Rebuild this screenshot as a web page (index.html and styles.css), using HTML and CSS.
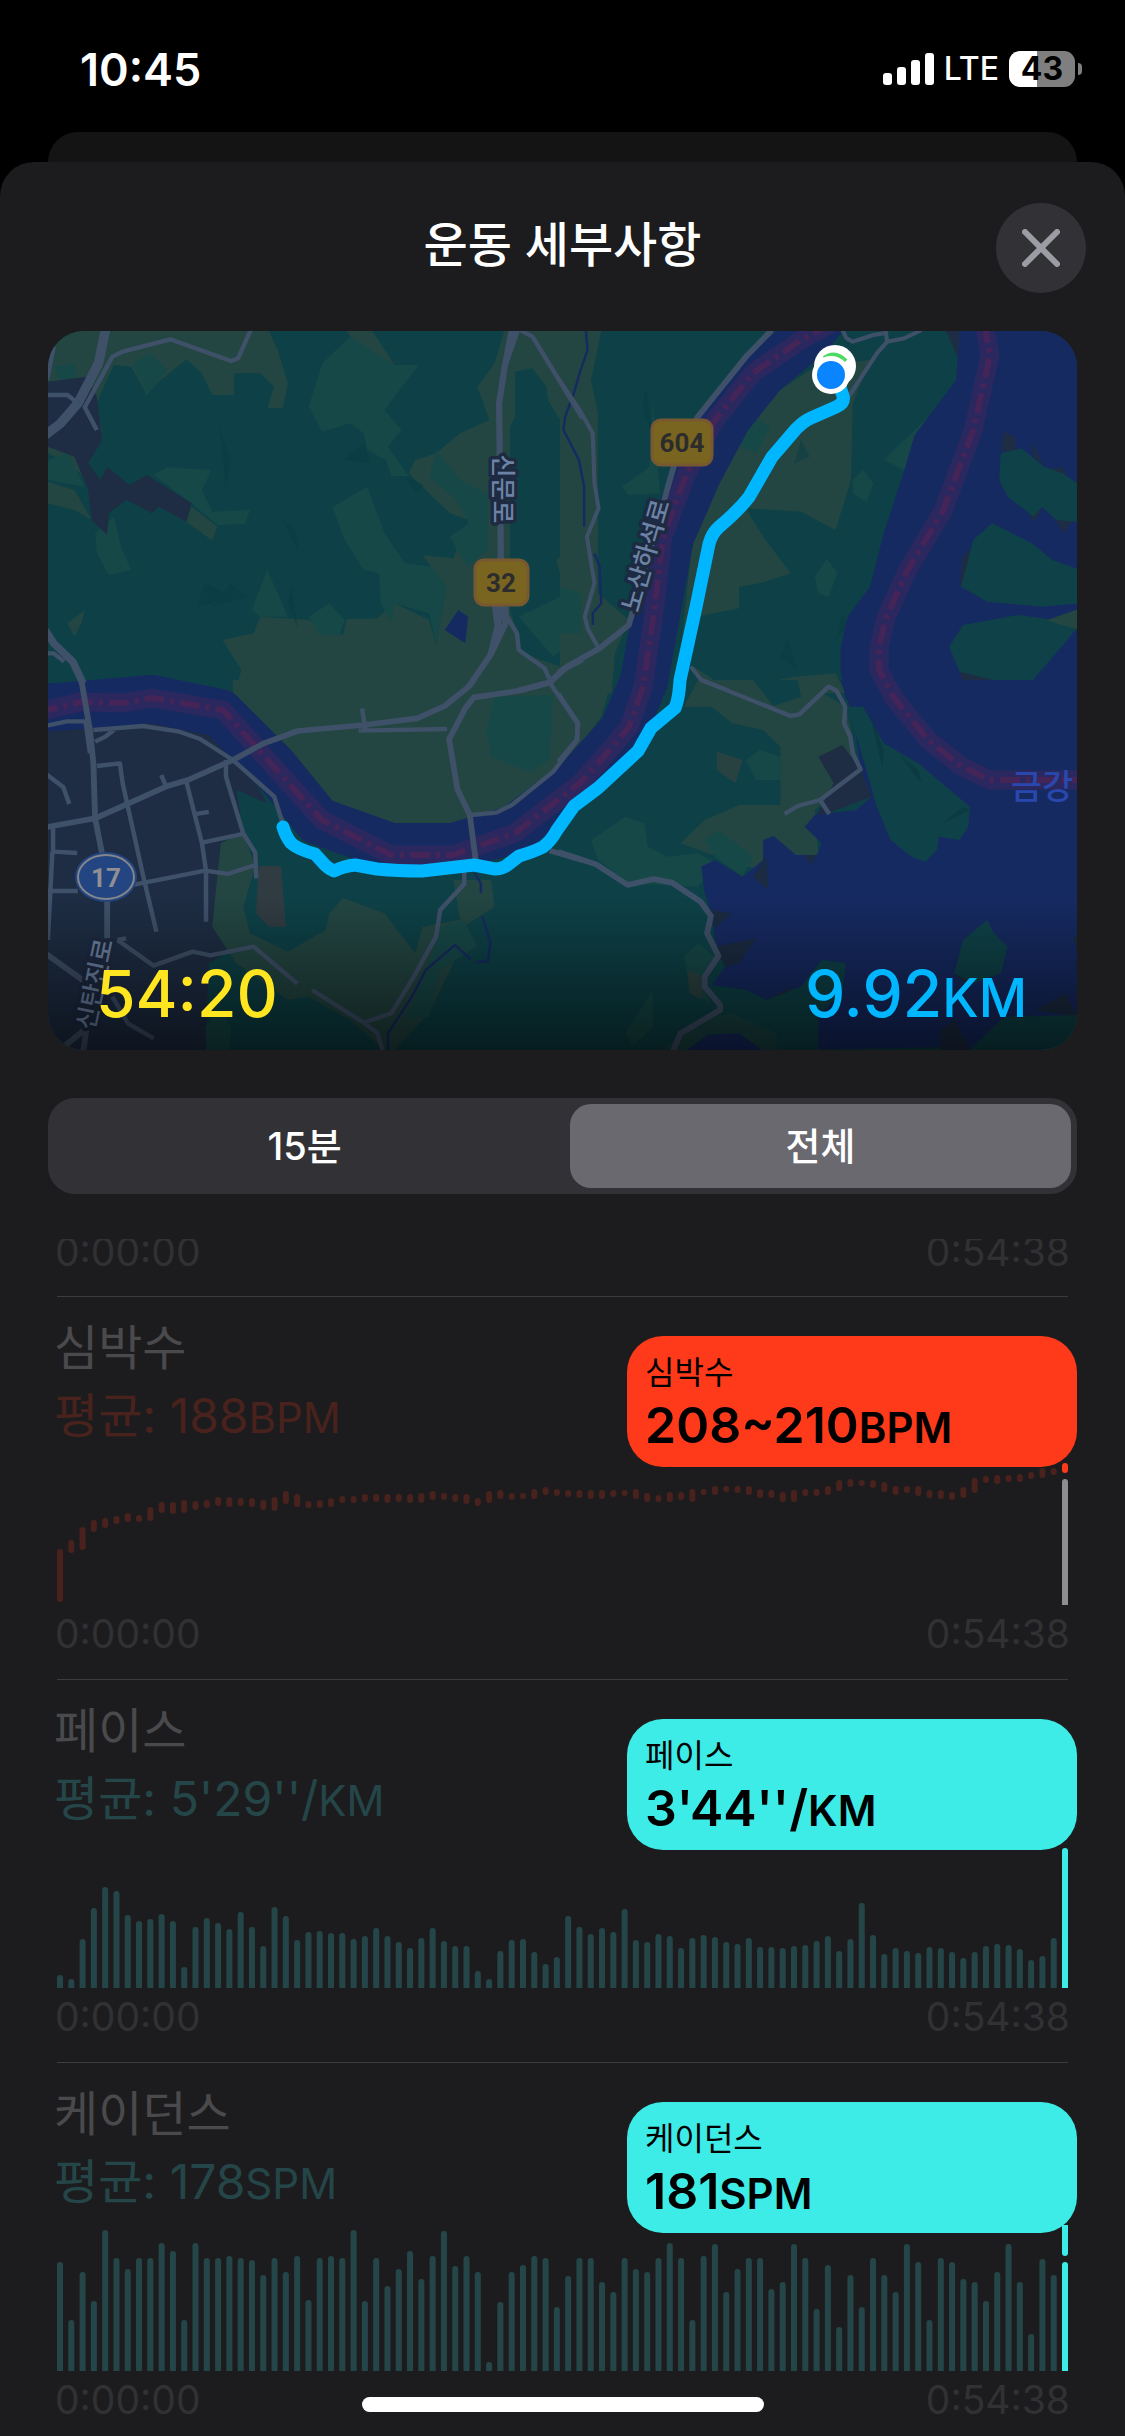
FILE: index.html
```html
<!DOCTYPE html>
<html lang="ko">
<head>
<meta charset="utf-8">
<meta name="viewport" content="width=device-width, initial-scale=1">
<title>운동 세부사항</title>
<link rel="stylesheet" href="styles.css">
</head>
<body>
<div class="screen">
  <div class="status">
    <span class="clock">10:45</span>
    <div class="status-right">
      <svg class="signal" viewBox="0 0 51 32" aria-hidden="true"><rect y="20" width="9" height="12" rx="3"/><rect x="14" y="14" width="9" height="18" rx="3"/><rect x="28" y="7" width="9" height="25" rx="3"/><rect x="42" width="9" height="32" rx="3"/></svg>
      <span class="network">LTE</span>
      <span class="battery">43</span>
      <span class="battery-nub"></span>
    </div>
  </div>
  <div class="back-card"></div>
  <main class="sheet">
    <header class="sheet-header">
      <h1>운동 세부사항</h1>
      <button class="close" type="button" aria-label="닫기">
        <svg viewBox="0 0 38 38" aria-hidden="true"><path d="M3 3L35 35M35 3L3 35"/></svg>
      </button>
    </header>

    <section class="map">
      <svg class="map-art" viewBox="0 0 1029 719" preserveAspectRatio="xMidYMid slice" aria-label="운동 경로">
        <defs>
          <linearGradient id="shade" x1="0" y1="0" x2="0" y2="1"><stop offset="0" stop-color="#000" stop-opacity="0"/><stop offset="1" stop-color="#000" stop-opacity=".55"/></linearGradient>
        </defs>
        <rect width="1029" height="719" fill="#0d4147"/>
        <!-- land cover, one group per map tile -->
        <g transform="translate(-8 -11) scale(.3444 .3333)">
          <g fill="#234642">
            <path d="M23 33H665L690 90 720 190 705 265H660L680 200 640 160H563V225H500L470 160 425 118 345 185 310 225 265 140 215 135 185 200 160 260 180 330 130 400 140 480 80 430 23 400Z"/>
            <path d="M23 485L100 510 150 600 100 570 23 550ZM425 605L440 560 515 620 500 662ZM80 910L130 870 120 910 100 950ZM890 33H965L1030 135H1100L1040 180 960 130Z"/>
            <path d="M1348 33H1568V250L1510 300 1475 240 1470 200 1430 145 1380 155V290L1365 320V870L1400 1000 1568 1060V1140H560L585 1050 530 960 620 940 640 890 780 900 880 945 890 897 980 895 1030 850 1130 900 1150 975 1180 800 1110 705 1200 715 1245 600 1190 580 1070 460 1090 420 1150 400 1220 340 1305 300 1270 200 1320 130Z"/>
            <path d="M1568 400L1520 500 1530 620 1568 640ZM1568 650L1500 720 1520 800 1568 820Z"/>
          </g>
          <g fill="#174848">
            <path d="M900 50L820 130 780 260 820 335 900 310 940 340 950 390 1005 420 1020 468H1070L1010 380 1050 330 1000 270 1100 135H1030Z"/>
            <path d="M950 500L850 560 880 650 940 750 985 760 990 850 1020 910 1030 850 1130 880 1150 975 1180 800 1140 740 1060 730 1000 640Z"/>
            <path d="M1150 390L1220 480 1300 520V690L1240 740 1190 650 1245 610 1210 540 1130 470ZM330 465L370 442 498 450 470 510 500 575 610 570 595 612 515 615 440 550ZM215 590L235 680 265 750 200 765 165 700 160 640ZM270 130L320 100 370 150 310 225ZM660 750L615 870 640 890 720 890ZM780 890L840 850 885 900 870 945 810 945ZM40 140L100 130 105 175 60 180ZM23 420L80 400 130 500 23 480ZM1390 890L1568 800V940L1490 1010Z"/>
          </g>
          <path fill="#1e2d44" d="M23 185L135 170 165 230 180 360 140 430 175 480 195 440 260 495 310 465 440 550 425 605 345 560 325 580 250 540 200 580 195 645 150 600 140 510 100 410 23 380Z"/>
          <path fill="#0a3a42" opacity=".5" d="M520 320L555 420 540 500ZM455 860L480 790 560 830ZM700 590L745 640 750 690ZM1060 470L1115 495 1095 520ZM500 860L555 790 600 830ZM880 420L940 370 960 430ZM730 800L748 925 720 850Z"/>
          <path fill="#162a62" d="M1215 870L1243 890 1235 970 1175 930Z"/>
        </g>
        <g transform="translate(512 -11) scale(.3444 .3333)">
          <g fill="#234642">
            <path d="M0 33H120L90 180 110 280V820L200 900 160 1000 150 1120H0ZM620 33L500 150 430 260 400 400 470 300 640 130Z"/>
            <path d="M640 210L740 140 900 120 850 250 845 480 800 630 700 575 540 565 590 650 670 760 580 790 520 800V865L420 885 380 900 350 1000 380 700 430 500 560 260Z"/>
            <path d="M680 1070L800 1060 830 1120H420L390 1040 490 1110Z"/>
          </g>
          <g fill="#174848"><path d="M500 370L550 280 610 320 570 400ZM850 480L880 450 910 490 890 545 850 520ZM740 770L775 715 805 760 780 830 750 820ZM0 800L60 820 60 940 0 940ZM180 500L260 440 270 240 290 520 200 525ZM940 420L1080 280 1030 345 1000 450Z"/></g>
          <path fill="#0a3a42" opacity=".5" d="M250 200L270 350 240 260ZM800 960L820 880 840 920ZM560 120L590 70 640 100 600 160ZM700 360L725 410 680 430ZM660 960L690 1050 640 1010Z"/>
          <path fill="#162a62" d="M1160 33H1510V1140H830L815 1060V980L835 890 900 800 940 640 1000 450 1030 345 1150 180Z"/>
          <g fill="#1e2d44"><path d="M1280 390L1290 335 1320 350 1325 400ZM1370 360L1405 440 1375 410ZM1160 800L1170 710 1240 640 1200 800ZM1410 450L1460 440 1470 480ZM1160 1050L1170 1090 1280 1080ZM1360 580L1375 605 1400 570ZM1435 590L1460 640 1490 600ZM1120 33H1160L1155 110Z"/></g>
          <g fill="#0e4248"><path d="M1280 400L1340 385 1405 440 1460 460 1501 490V605L1440 600 1400 560 1375 590 1300 530 1275 480Z"/><path d="M1255 610L1370 670 1430 720 1510 750V850L1400 860 1240 845 1165 800 1200 660Z"/><path d="M1130 980L1170 915 1330 885 1440 900 1501 925 1440 1000 1390 1060 1350 1110 1260 1080 1160 1055Z"/></g>
          <path fill="#234642" d="M1415 900L1510 865V930L1440 910Z"/>
        </g>
        <g transform="translate(-8 349) scale(.3444 .3333)">
          <path fill="#1e2d44" d="M23 110L240 85 520 110 660 370 570 330 590 450 525 490 530 640 500 740 570 800 490 850 480 1120H23Z"/>
          <g fill="#234642">
            <path d="M560 0H1568V300L1400 440H980L830 400 680 180 560 40Z"/>
            <path d="M525 490L590 460 625 560 590 680 610 760 720 815 830 750 840 700 880 655 1000 700 1090 820 1110 740 1220 720 1200 600 1310 600 1320 680 1230 740 1200 850 1130 1000 1020 1120H1010L900 1020 780 950 720 960 570 850 500 740Z"/>
          </g>
          <g fill="#174848"><path d="M1320 50L1490 45 1480 240 1420 275 1310 230 1295 150ZM1165 740L1230 720 1270 800 1160 870 1130 1010 1060 1020 1110 900ZM480 1040L520 990 555 1040 550 1120H485Z"/></g>
          <path fill="#303c42" d="M635 558H700L714 740H665L627 700Z"/>
        </g>
        <g transform="translate(512 349) scale(.3444 .3333)">
          <path fill="#234642" d="M0 0H150L120 110 0 280ZM400 0H700L830 80 870 270 740 390 750 525H685L620 468 580 570 430 520 350 490 420 420 520 375H640V200L590 150 500 130 440 80H360Z"/>
          <g fill="#174848"><path d="M90 480L190 410 245 430 255 500 310 530 400 520 520 590 450 560 400 620 200 610 110 540ZM420 480L460 450 560 530 530 590 450 530ZM540 240L580 210 640 230V300H570ZM360 830L400 790 450 830 400 900 440 970 380 940ZM190 1060L270 930V1040L210 1100Z"/></g>
          <path fill="#0d4147" d="M560 0H690L700 50 620 78Z"/>
          <path fill="#3a4340" opacity=".6" d="M455 215L530 240 510 310 455 270ZM370 870L420 890 410 960 375 940Z"/>
          <path fill="#1e2d44" d="M750 230L820 195 873 268 905 350 740 415 795 310ZM820 0L870 70 840 80Z"/>
          <path fill="#162a62" d="M815 0H1510V1120H1105L1150 1100 750 1109V1010L820 930 830 850 760 840 700 920 600 960 540 930 440 915 480 860 450 780 440 700 420 640 410 560 450 540 530 590 590 540V480L620 468 685 525H745L760 490 710 440 740 405 860 390 905 350 873 268 850 100Z"/>
          <path fill="#1b2b42" d="M440 690L500 700 450 745ZM450 800L570 775 520 850 480 860ZM560 590L600 530 605 630ZM600 960L680 915 640 960ZM1105 1050L1145 1020 1190 1109H1105ZM1380 990L1470 940 1501 1010ZM1145 885L1200 890 1190 920ZM710 525H745L730 555ZM1490 780L1510 750V830Z"/>
          <g fill="#0e4248"><path d="M835 80H880L940 190 1040 250 1190 380 1185 440 1160 480 1100 470 1095 510 1060 545 1020 530 960 480 920 380 870 200ZM1240 720L1260 760 1300 800 1280 880 1200 910 1145 880 1170 780ZM1190 1109L1290 1010 1510 1005V1120H1190ZM440 920L540 930 600 960 700 920 760 840 830 850 820 930 750 1010V1120H600L520 1055 430 1065 440 990Z"/></g>
          <path fill="#0a353d" opacity=".6" d="M985 225L1040 270 1050 310ZM1110 430L1170 380 1190 390ZM900 100L940 210 935 260Z"/>
          <path fill="#234642" opacity=".6" d="M420 1010L500 1000 630 1060V1120H590L520 1060H430L370 1109H300Z"/>
          <path fill="#162a62" d="M370 1109L430 1065 520 1060 600 1120Z"/>
        </g>

        <!-- rivers and their boundary line -->
        <g fill="none" stroke-linejoin="round">
          <path stroke="#162a62" stroke-width="48" d="M-20 378L33 374 104 368 172 382 226 436 270 490 343 516 405 516 467 498 532 448 575 400 596 350 607 289 622 206 650 142 680 86 715 42 760 5 780 -20"/>
          <path stroke="#2a285f" stroke-width="19" d="M-10 381L33 371 75 372 104 367 175 379 226 436 274 489 343 524 405 524 467 502 532 452 553 429 581 396 595 356 605 289 615 206 639 142 667 89 705 42 753 9 784 -8M936 -8L942 24 925 100 895 180 859 240 838 287 831 315V339L846 367 880 409 913 435 942 449H1040"/>
          <path stroke="#452458" stroke-width="6" stroke-dasharray="20 6 4 6" d="M-10 381L33 371 75 372 104 367 175 379 226 436 274 489 343 524 405 524 467 502 532 452 553 429 581 396 595 356 605 289 615 206 639 142 667 89 705 42 753 9 784 -8M936 -8L942 24 925 100 895 180 859 240 838 287 831 315V339L846 367 880 409 913 435 942 449H1040"/>
        </g>
        <g fill="none" stroke="#162a62" stroke-width="7">
          <path transform="translate(512 -11) scale(.3444 .3333)" d="M75 33L80 90 60 150 40 220 15 290 10 330 55 420 70 500V620M100 700L115 740 120 850 95 880V915"/>
          <path transform="translate(-8 349) scale(.3444 .3333)" d="M1262 580L1280 610V640M1285 710L1308 790 1300 845H1265M1250 838L1205 795 1120 870 1080 950 1010 1060V1120"/>
        </g>

        <!-- roads -->
        <g fill="none" stroke="#3f5069" stroke-linejoin="round">
          <g transform="translate(-8 -11) scale(.3444 .3333)">
            <path stroke-width="28" d="M190 30L170 130 110 250 60 310 15 345"/>
            <path stroke-width="13" d="M15 225H80L110 250M165 330L130 262 210 110 240 95 378 58 555 123 575 115 612 30M40 80L20 180M1395 30L1430 50 1575 295M1350 880L1385 940 1390 990 1465 1045 1485 1090M15 1000H40L70 1025"/>
            <path stroke-width="18" d="M1385 30L1350 135 1333 250 1338 700V880L1308 1005 1245 1100M1370 30L1350 135M1320 850L1330 930 1308 1005M1352 860V910L1308 1005M1390 1112L1480 1087 1525 1045 1575 1018"/>
            <path stroke-width="22" d="M15 930L40 970 95 1025 125 1090"/>
          </g>
          <g transform="translate(512 -11) scale(.3444 .3333)">
            <path stroke-width="12" d="M-5 175L60 275 95 340 100 490 112 565 78 650 100 790 72 890 80 925 112 985M820 30L832 55 850 65 910 45 950 38M945 30L950 65 920 100 835 235M950 65L1000 55 1050 30M380 1040L410 1080 490 1112"/>
            <path stroke-width="17" d="M-5 1060L20 1040 115 985 200 915 215 860 330 440 400 290 540 110 615 30"/>
          </g>
          <g transform="translate(-8 349) scale(.3444 .3333)">
            <path stroke-width="17" d="M120 0L145 150 155 250 160 415 180 520 195 640V775M15 442L160 415 370 318 430 300 560 240 650 190 748 153 940 135 1095 115 1175 78 1245 20 1262 -5M1490 5L1385 33 1260 52 1235 85 1188 178 1212 328 1248 405 1265 540M15 820L130 905M75 1095L135 1045 125 1120"/>
            <path stroke-width="13" d="M1215 550L1232 580V612L1162 690 1150 770 1080 900 1020 1000 940 1028 790 930M940 1028L980 1060 997 1120M1250 405L1325 398 1370 375 1490 275 1560 180V130L1480 8M935 85L945 150M925 152L1182 147M15 138L78 124H132L145 220M155 150L300 138 405 155 465 177 560 240 680 350 705 430M160 185L190 170 215 150M165 258L232 250 240 310 300 590 338 755M540 240V290L590 460 625 518 628 595M625 555L545 582 480 572 270 615M425 305L470 488 482 572V725M470 488L590 462M455 402L490 396M352 285L367 322M38 445V515L108 519M36 515L23 780M15 633H110M15 280L68 322 85 372M225 780L330 857 443 815 495 826 620 800 748 912M250 775L225 780M210 950L255 1030 330 1075"/>
            <path stroke-width="17" d="M1480 512L1575 540"/>
          </g>
          <g transform="translate(512 349) scale(.3444 .3333)">
            <path stroke-width="13" d="M410 0L670 108 695 103 780 20 803 32 828 80 825 130 843 170 850 220 873 268 755 360 690 378 652 402M755 360L782 402M-5 40L53 130 48 180 -5 245"/>
            <path stroke-width="17" d="M-5 516L105 553 197 615 272 597 325 608 408 665 438 708 427 760 460 828 420 890V920L465 975V990L350 1060 325 1120"/>
          </g>
        </g>

        <!-- place names and route shields -->
        <g class="map-label" text-anchor="middle" font-size="25">
          <text transform="translate(446 158) rotate(90)">신문로</text>
          <text transform="translate(606 227) rotate(-74)">노산하석로</text>
        </g>
        <text class="map-river" x="994" y="468" font-size="34" text-anchor="middle">금강</text>
        <g class="map-shield" text-anchor="middle">
          <rect x="427" y="229" width="53" height="45" rx="9"/><text x="453" y="261">32</text>
          <rect x="604" y="89" width="60" height="45" rx="9"/><text x="634" y="121">604</text>
        </g>
        <ellipse cx="58" cy="546" rx="31" ry="25" fill="#234581"/>
        <ellipse cx="58" cy="546" rx="28" ry="22" fill="none" stroke="#84868c" stroke-width="2"/>
        <text class="map-oval" x="58" y="556" text-anchor="middle">17</text>
        <g class="map-label" font-size="25"><text transform="translate(46 700) rotate(-78)">신탄진로</text></g>
        <rect y="565" width="1029" height="154" fill="url(#shade)"/>

        <!-- recorded route -->
        <path fill="none" stroke="#00b6ff" stroke-width="13" stroke-linecap="round" stroke-linejoin="round" d="M235 496Q238 506 243 512Q249 518 267 523L277 534Q281 538 286 540Q296 535 307 534L329 538Q350 540 374 540L426 534 447 538Q453 538 458 535L471 525Q485 521 495 516Q503 510 509 499L526 475 550 457 590 420 603 397 627 377Q631 368 632 349L648 276 661 213Q664 202 671 196Q690 180 701 166L724 126 748 98Q756 90 763 87L788 76Q797 72 795 65L790 50"/>
        <circle cx="787" cy="35" r="21" fill="#fff"/>
        <path fill="none" stroke="#4cd964" stroke-width="4" d="M776 27Q787 19 798 30"/>
        <circle cx="783" cy="44" r="19" fill="#fff"/>
        <circle cx="783" cy="44" r="14" fill="#0a84ff"/>
      </svg>
      <div class="map-stats">
        <span class="duration">54:20</span>
        <span class="distance">9.92<small>KM</small></span>
      </div>
    </section>

    <div class="segments" role="group" aria-label="구간">
      <button type="button" aria-pressed="false">15분</button>
      <button type="button" aria-pressed="true">전체</button>
    </div>

    <div class="metrics">
      <div class="times times-cut"><span>0:00:00</span><span>0:54:38</span></div>

      <section class="metric heart">
        <h2>심박수</h2>
        <p class="average">평균: 188<small>BPM</small></p>
        <svg class="chart" data-series="heart" viewBox="0 0 1011 146" aria-label="심박수 그래프"></svg>
        <div class="times"><span>0:00:00</span><span>0:54:38</span></div>
        <div class="bubble"><span class="bubble-name">심박수</span><strong>208~210<small>BPM</small></strong></div>
      </section>

      <section class="metric">
        <h2>페이스</h2>
        <p class="average">평균: 5'29''/<small>KM</small></p>
        <svg class="chart" data-series="pace" viewBox="0 0 1011 146" aria-label="페이스 그래프"></svg>
        <div class="times"><span>0:00:00</span><span>0:54:38</span></div>
        <div class="bubble"><span class="bubble-name">페이스</span><strong>3'44''/<small>KM</small></strong></div>
      </section>

      <section class="metric">
        <h2>케이던스</h2>
        <p class="average">평균: 178<small>SPM</small></p>
        <svg class="chart" data-series="cadence" viewBox="0 0 1011 146" aria-label="케이던스 그래프"></svg>
        <div class="times"><span>0:00:00</span><span>0:54:38</span></div>
        <div class="bubble"><span class="bubble-name">케이던스</span><strong>181<small>SPM</small></strong></div>
      </section>
    </div>
  </main>
  <div class="home-indicator"></div>
</div>
<script src="charts.js"></script>
</body>
</html>
```
FILE: styles.css
```css
* {
  box-sizing: border-box;
}

body {
  margin: 0;
  background: #000;
  color: #fff;
  font-family: "Inter", "Noto Sans CJK KR", sans-serif;
}

h1,
h2,
p {
  margin: 0;
  font-weight: 400;
}

button {
  border: 0;
  padding: 0;
  color: inherit;
  font: inherit;
}

.screen {
  display: flex;
  flex-direction: column;
  height: 100vh;
  overflow: hidden;
}

/* Status bar */
.status {
  display: flex;
  flex: none;
  align-items: center;
  justify-content: space-between;
  height: 132px;
  padding: 6px 43px 0 80px;
}

.clock {
  font-size: 45px;
  font-weight: 600;
}

.status-right {
  display: flex;
  align-items: center;
}

.signal {
  width: 51px;
  height: 32px;
  margin-right: 10px;
  fill: #fff;
}

.network {
  margin-right: 10px;
  font-size: 32px;
  font-weight: 500;
  line-height: 36px;
}

.battery {
  width: 66px;
  height: 36px;
  border-radius: 11px;
  background: linear-gradient(90deg, #fff 43%, #7f7f7f 43%);
  color: #000;
  font-size: 32px;
  font-weight: 700;
  line-height: 36px;
  text-align: center;
}

.battery-nub {
  width: 4px;
  height: 12px;
  margin-left: 3px;
  border-radius: 0 4px 4px 0;
  background: #7f7f7f;
}

/* Sheet */
.back-card {
  flex: none;
  height: 30px;
  margin: 0 48px;
  border-radius: 30px 30px 0 0;
  background: #141414;
}

.sheet {
  display: flex;
  flex: 1;
  flex-direction: column;
  min-height: 0;
  border-radius: 34px 34px 0 0;
  background: #1c1c1e;
}

.sheet-header {
  display: grid;
  flex: none;
  grid-template-columns: 90px 1fr 90px;
  align-items: center;
  height: 169px;
  padding: 2px 39px 0;
}

h1 {
  padding-bottom: 6px;
  grid-column: 2;
  font-size: 48px;
  font-weight: 500;
  line-height: 60px;
  text-align: center;
}

.close {
  display: grid;
  width: 90px;
  height: 90px;
  border-radius: 50%;
  background: #313136;
  place-items: center;
}

.close svg {
  width: 38px;
  fill: none;
  stroke: #9c9ca4;
  stroke-linecap: round;
  stroke-width: 6;
}

/* Map */
.map {
  display: grid;
  flex: none;
  height: 719px;
  margin: 0 48px;
  overflow: hidden;
  border-radius: 36px;
}

.map > * {
  grid-area: 1 / 1;
}

.map-art {
  width: 100%;
  height: 719px;
}

.map-label {
  fill: #6d83a5;
  stroke: #1d2a41;
  stroke-width: 7px;
  stroke-linejoin: round;
  paint-order: stroke;
  font-weight: 500;
}

.map-river {
  fill: #2947ac;
  font-weight: 500;
}

.map-shield rect {
  fill: #796420;
  stroke: #785830;
  stroke-width: 3px;
}

.map-shield text {
  fill: #2c2c2d;
  font: 700 26px "Roboto", sans-serif;
}

.map-oval {
  fill: #8f9094;
  font: 700 26px "Roboto", sans-serif;
}

.map-stats {
  display: flex;
  z-index: 1;
  align-items: last baseline;
  justify-content: space-between;
  padding: 0 50px 13px 48px;
  font-size: 64px;
  font-weight: 500;
  line-height: 78px;
}

.map-stats small {
  font-size: 53px;
}

.duration {
  color: #ffe620;
}

.distance {
  color: #00b6ff;
}

/* Segmented control */
.segments {
  display: grid;
  flex: none;
  grid-template-columns: 1fr 1fr;
  gap: 15px;
  height: 96px;
  margin: 48px 48px 45px;
  padding: 6px;
  border-radius: 27px;
  background: #323236;
}

.segments button {
  padding-bottom: 6px;
  border-radius: 21px;
  background: transparent;
  font-size: 38px;
  font-weight: 500;
}

.segments button[aria-pressed="true"] {
  background: #6a696f;
}

/* Metrics */
.metrics {
  flex: 1;
  min-height: 0;
  overflow-y: auto;
  padding: 0 57px;
  scrollbar-width: none;
}

.metric {
  position: relative;
  height: 383px;
  padding-top: 17px;
  border-top: 1px solid #3c3c3e;
  color: #254648;
}

.heart {
  color: #4a221d;
}

h2 {
  margin-left: -3px;
  color: #4a4a4c;
  font-size: 48px;
  line-height: 68px;
}

.average {
  height: 77px;
  margin-left: -3px;
  font-size: 48px;
  line-height: 68px;
}

.average small {
  font-size: 42px;
}

.chart {
  display: block;
  width: 100%;
  fill: currentColor;
}

.chart .cursor {
  fill: #8e8e90;
}

.chart .current {
  fill: #3debe7;
}

.heart .chart .current {
  fill: #ff3a1a;
}

.times {
  display: flex;
  justify-content: space-between;
  margin: 0 -2px;
  padding-top: 6px;
  color: #313133;
  font-size: 39px;
  line-height: 46px;
}

.times-cut {
  align-items: flex-end;
  height: 57px;
  padding: 0 0 27px;
  line-height: 34px;
}

.bubble {
  display: flex;
  position: absolute;
  top: 39px;
  right: -9px;
  flex-direction: column;
  width: 450px;
  height: 131px;
  padding: 14px 18px;
  border-radius: 36px;
  background: #3debe7;
  color: #000;
}

.heart .bubble {
  background: #ff3a1a;
}

.bubble-name {
  font-size: 32px;
  line-height: 46px;
}

.bubble strong {
  font-size: 50px;
  font-weight: 600;
  line-height: 58px;
}

.bubble small {
  font-size: 42px;
}

.home-indicator {
  position: fixed;
  bottom: 24px;
  left: 50%;
  width: 402px;
  height: 15px;
  border-radius: 8px;
  background: #fff;
  transform: translateX(-50%);
}
```
FILE: charts.js
```js
// Each bar is [top, bottom], measured upwards from the foot of the chart.
const heart = [[56,3],[65,52],[78,55],[85,73],[87,77],[89,81],[92,83],[90,83],[98,84],[103,92],[103,91],[105,92],[104,95],[105,97],[108,99],[108,98],[107,99],[107,98],[105,95],[108,94],[114,101],[111,98],[104,97],[105,97],[107,98],[109,102],[109,102],[111,103],[111,103],[111,102],[111,103],[111,102],[112,102],[114,105],[112,105],[111,103],[111,101],[107,99],[114,102],[115,106],[112,105],[112,106],[116,106],[118,110],[116,109],[115,108],[115,107],[115,106],[115,106],[115,108],[115,109],[116,106],[112,103],[110,103],[113,103],[113,105],[116,103],[116,110],[119,110],[119,113],[119,112],[119,110],[116,107],[115,107],[113,103],[115,103],[116,109],[116,109],[119,110],[125,114],[126,118],[125,119],[125,117],[123,113],[119,110],[119,112],[119,109],[115,107],[115,106],[113,105],[118,107],[127,112],[129,122],[130,121],[130,123],[131,123],[133,126],[137,127],[137,130]];
const pace = [13,9,49,80,101,97,73,67,69,74,67,21,61,70,65,59,76,61,42,81,72,48,56,57,55,55,49,52,60,52,46,40,50,60,47,42,42,17,9,37,48,49,36,24,31,72,61,54,60,56,79,48,46,54,52,40,50,53,51,46,44,50,41,41,40,42,43,47,52,37,49,85,53,34,40,37,35,41,40,36,30,36,42,44,43,39,28,32,50];
const cadence = [109,51,99,70,141,113,102,113,113,128,120,51,128,113,113,115,113,111,96,113,99,115,71,113,115,113,141,70,113,85,102,120,92,115,140,105,115,99,9,69,99,106,115,113,64,95,113,113,89,79,113,102,99,113,128,113,51,115,127,79,102,113,113,82,89,127,113,62,106,44,96,64,113,96,79,127,109,51,113,109,92,89,70,99,127,89,37,112,96];

// Bars that stand on the axis run below it, so only their tops are rounded.
const standing = (heights) => heights.map((h) => [h, -6]);

const series = {
  heart: { bars: heart, last: [["cursor", 126, -6], ["current", 142, 132]] },
  pace: { bars: standing(pace), last: [["current", 140, -6]] },
  cadence: { bars: standing(cadence), last: [["current", 109, -6], ["current", 150, 115]] },
};

const HEIGHT = 146;
const STEP = 1005 / 89;

function addBar(svg, index, top, bottom, name) {
  const rect = document.createElementNS("http://www.w3.org/2000/svg", "rect");
  rect.setAttribute("x", index * STEP);
  rect.setAttribute("y", HEIGHT - top);
  rect.setAttribute("width", 6);
  rect.setAttribute("height", top - bottom);
  rect.setAttribute("rx", 3);
  if (name) rect.setAttribute("class", name);
  svg.append(rect);
}

document.querySelectorAll(".chart").forEach((svg) => {
  const { bars, last } = series[svg.dataset.series];
  bars.forEach(([top, bottom], i) => addBar(svg, i, top, bottom));
  last.forEach(([name, top, bottom]) => addBar(svg, 89, top, bottom, name));
});
```
